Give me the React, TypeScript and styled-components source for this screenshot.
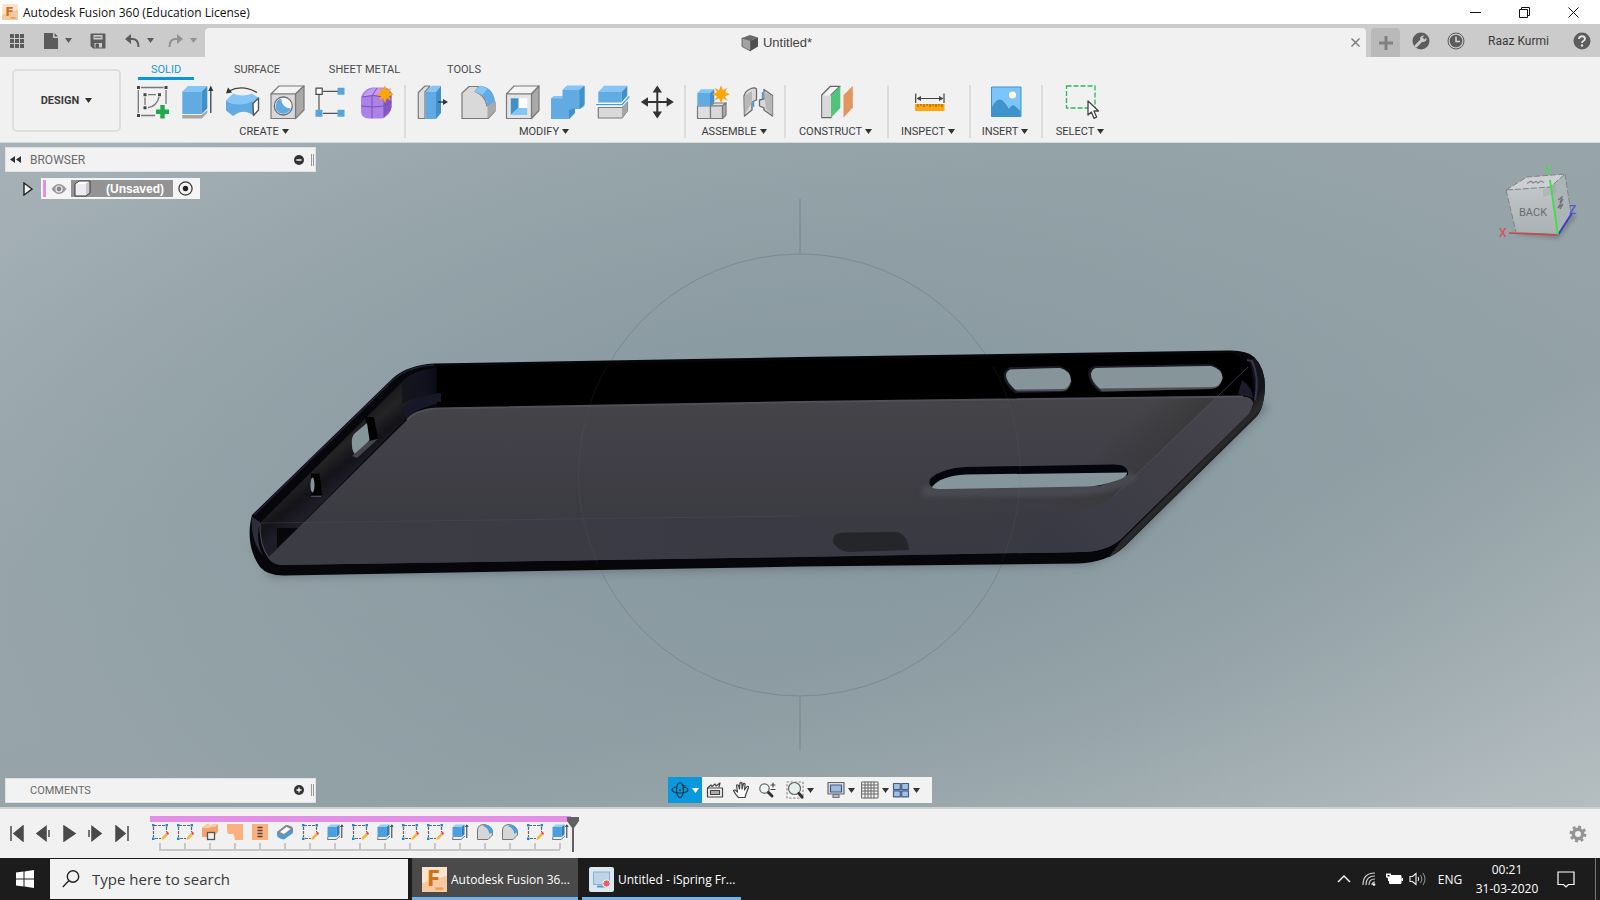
import React from "react";
import styled, { createGlobalStyle } from "styled-components";

const Global = createGlobalStyle`
  *, *::before, *::after { box-sizing: border-box; }
  body { margin: 0; background: #f1f1f1; }
  svg { display: block; flex: none; }
  button {
    border: 0; padding: 0; margin: 0; background: none; color: inherit;
    font: inherit; display: flex; align-items: center; justify-content: center;
  }
`;

const ui = `Roboto, "Liberation Sans", sans-serif`;
const shell = `"Open Sans", "Noto Sans", sans-serif`;

/* ---------- Frame ---------- */

const Window = styled.div`
  display: flex;
  flex-direction: column;
  min-height: 100vh;
  font-family: ${ui};
  font-size: 11px;
  color: #3c3c3c;
`;

const TitleBar = styled.header`
  display: flex;
  align-items: center;
  height: 24px;
  padding: 0 2px;
  background: #fff;
`;

const WindowTitle = styled.h1`
  flex: 1;
  margin: 1px 0 0 5px;
  font: 400 12px/23px ${shell};
  color: #111;
`;

const WindowButton = styled.button`
  width: 49px;
  height: 24px;
`;

const TabBar = styled.div`
  display: flex;
  height: 33px;
  background: #cbcbcb;
`;

const QuickAccess = styled.div`
  display: flex;
  align-items: center;
  gap: 18px;
  width: 205px;
  padding-left: 9px;
`;

const UndoPair = styled.div`
  display: flex;
  gap: 13px;
`;

const QuickButton = styled.button<{ $faded?: boolean }>`
  gap: 6px;
  color: ${(p) => (p.$faded ? "#929292" : "#5c5c5c")};
`;

const DocumentTab = styled.div`
  display: flex;
  flex: 1;
  align-items: center;
  margin-top: 4px;
  padding-right: 4px;
  background: #f1f1f1;
  border-radius: 4px 4px 0 0;
`;

const DocumentName = styled.div`
  display: flex;
  flex: 1;
  align-items: center;
  justify-content: center;
  gap: 4px;
  font: 13px "Liberation Sans", Arial, sans-serif;
  color: #444;
`;

const TabClose = styled.button`
  width: 14px;
  height: 20px;
`;

const NewTab = styled.button`
  width: 29px;
  height: 29px;
  margin: 4px 0 0 5px;
  background: #b9b9b9;
  border-radius: 4px 4px 0 0;
`;

const Account = styled.div`
  display: flex;
  align-items: center;
  padding: 0 9px 0 11px;
`;

const RoundButton = styled.button`
  width: 19px;
  height: 33px;
  margin-right: 16px;
  &:last-child { margin-right: 0; }
`;

const UserName = styled.button`
  padding: 0 23px 0 7px;
  font-size: 12px;
  color: #3a3a3a;
`;

/* ---------- Ribbon ---------- */

const Ribbon = styled.div`
  display: flex;
  height: 86px;
  background: #f1f1f1;
  border-bottom: 1px solid #d6d9da;
`;

const WorkspaceButton = styled.button`
  gap: 6px;
  width: 109px;
  height: 63px;
  margin: 12px 9px 0 12px;
  border: 2px solid #dedede;
  border-radius: 5px;
  font-weight: 700;
`;

const RibbonBody = styled.div`
  display: flex;
  flex-direction: column;
`;

const RibbonTabs = styled.nav`
  display: flex;
  height: 23px;
  margin-left: 8px;
`;

const RibbonTab = styled.button<{ $w: number; $active?: boolean }>`
  width: ${(p) => p.$w}px;
  height: 23px;
  padding-top: 4px;
  color: ${(p) => (p.$active ? "#1a95d6" : "#4a4a4a")};
  border-bottom: 3px solid ${(p) => (p.$active ? "#0a97d9" : "transparent")};
`;

const Groups = styled.div`
  display: flex;
  padding-top: 5px;
`;

const Group = styled.section<{ $w?: number; $lead?: number; $last?: boolean }>`
  display: flex;
  flex-direction: column;
  align-items: center;
  width: ${(p) => (p.$w ? p.$w + "px" : "auto")};
  height: 53px;
  padding: 0 4px 0 ${(p) => p.$lead ?? 4}px;
  border-right: 2px solid ${(p) => (p.$last ? "transparent" : "#dcdcdc")};
`;

const IconRow = styled.div`
  display: flex;
  height: 35px;
`;

const ToolButton = styled.button`
  width: 45px;
  height: 34px;
`;

const GroupMenu = styled.button`
  gap: 3px;
  height: 18px;
  margin-top: 5px;
  padding-right: 2px;
  white-space: nowrap;
`;

/* ---------- Canvas ---------- */

const Viewport = styled.main`
  position: relative;
  display: flex;
  flex: 1;
  flex-direction: column;
  justify-content: space-between;
  min-height: 500px;
  padding: 4px 5px;
  background:
    radial-gradient(ellipse 900px 480px at 50% 50%, rgba(127, 146, 153, 0.75), rgba(127, 146, 153, 0) 100%),
    linear-gradient(160deg, #a5b1b6 0%, #98a6ab 35%, #95a3a8 65%, #b4bdc0 100%);
`;

const Scene = styled.svg`
  position: absolute;
  inset: 0;
  width: 100%;
  height: 100%;
`;

const CubeHolder = styled.div`
  position: absolute;
  top: 17px;
  right: 15px;
`;

const Overlay = styled.div`
  position: relative;
`;

const PanelBar = styled.div`
  display: flex;
  align-items: center;
  width: 311px;
  height: 25px;
  padding: 0 1px 0 2px;
  background: #f2f2f2;
  border: 1px solid #dfe2e3;
  color: #6a6a6a;
`;

const PanelToggle = styled.button`
  width: 14px;
  height: 16px;
  margin-right: 8px;
`;

const PanelName = styled.h2<{ $small?: boolean }>`
  flex: 1;
  margin: 0;
  font-size: ${(p) => (p.$small ? 11 : 12)}px;
  font-weight: 400;
`;

const PanelGrip = styled.span`
  width: 3px;
  height: 12px;
  margin-left: 7px;
  border-left: 1px solid #999;
  border-right: 1px solid #999;
`;

const TreeRow = styled.div`
  display: flex;
  align-items: center;
  height: 21px;
  margin: 6px 0 0 15px;
`;

const Expander = styled.button`
  width: 16px;
  height: 20px;
`;

const TreeItem = styled.div`
  display: flex;
  align-items: center;
  height: 21px;
  margin-left: 5px;
  padding: 2px;
  background: #f4f4f4;
`;

const TreeStripe = styled.span`
  width: 3px;
  height: 17px;
  background: #e38fe6;
`;

const TreeButton = styled.button`
  width: 25px;
  height: 17px;
`;

const TreeLabel = styled.span`
  display: flex;
  align-items: center;
  gap: 15px;
  width: 102px;
  height: 17px;
  padding-left: 3px;
  background: #939393;
  color: #fff;
  font: 700 12px "Liberation Sans", Arial, sans-serif;
`;

const BottomRow = styled(Overlay)`
  display: grid;
  grid-template-columns: 1fr auto 1fr;
  align-items: center;
`;

const NavBar = styled.div`
  display: flex;
  align-items: center;
  height: 26px;
  padding-right: 9px;
  background: #f2f2f2;
`;

const NavButton = styled.button<{ $w: number; $active?: boolean }>`
  width: ${(p) => p.$w}px;
  height: 26px;
  gap: 3px;
  background: ${(p) => (p.$active ? "#0b98dc" : "transparent")};
`;

/* ---------- Timeline ---------- */

const Timeline = styled.footer`
  display: flex;
  height: 51px;
  background: #f1f1f1;
  border-top: 2px solid #cfd1d2;
`;

const Playback = styled.div`
  display: flex;
  align-items: center;
  width: 150px;
  padding-left: 4px;
`;

const PlayButton = styled.button`
  width: 26px;
  height: 30px;
`;

const Track = styled.div`
  width: 421px;
  padding-top: 7px;
`;

const TrackBar = styled.div`
  height: 6px;
  background: #e38fe6;
`;

const Features = styled.div`
  display: flex;
  margin: 1px -4px 0 -3px;
`;

const Feature = styled.button`
  flex-direction: column;
  flex: none;
  gap: 2px;
  width: 25px;
`;

const Tick = styled.span`
  width: 2px;
  height: 6px;
  background: #c8c8c8;
`;

const Rail = styled.div`
  height: 2px;
  margin: 0 11px 0 9px;
  background: #c8c8c8;
`;

const Marker = styled.div`
  flex: 1;
  margin: 8px 0 0 -5px;
`;

const Settings = styled.button`
  width: 44px;
`;

/* ---------- Taskbar ---------- */

const Taskbar = styled.div`
  display: flex;
  align-items: stretch;
  height: 42px;
  background: #1c1c1c;
  color: #fff;
  font-family: ${shell};
  font-size: 12px;
`;

const Start = styled.button`
  width: 50px;
`;

const Search = styled.label`
  display: flex;
  align-items: center;
  gap: 12px;
  width: 358px;
  margin: 1px 0;
  padding-left: 12px;
  background: #f2f2f2;
`;

const SearchInput = styled.input`
  flex: 1;
  min-width: 0;
  padding: 0;
  border: 0;
  outline: 0;
  background: transparent;
  font: 15px ${shell};
  color: #333;
  &::placeholder { color: #3a3a3a; opacity: 1; }
`;

const Task = styled.button<{ $w: number; $active?: boolean }>`
  justify-content: flex-start;
  gap: 4px;
  width: ${(p) => p.$w}px;
  margin-left: 4px;
  padding: 3px 0 0 ${(p) => (p.$active ? 10 : 7)}px;
  background: ${(p) => (p.$active ? "#4a4a4a" : "transparent")};
  border-bottom: 3px solid #6fb4ea;
  white-space: nowrap;
`;

const Tray = styled.div`
  display: flex;
  align-items: center;
  margin-left: auto;
`;

const TrayButton = styled.button<{ $w: number }>`
  width: ${(p) => p.$w}px;
  height: 42px;
`;

const Clock = styled.time`
  width: 76px;
  text-align: center;
  line-height: 19px;
`;

const ShowDesktop = styled.button`
  width: 5px;
  height: 42px;
  margin-left: 8px;
  border-left: 1px solid #777;
`;

/* ---------- Small drawings ---------- */

const Caret = ({ color = "#333" }: { color?: string }) => (
  <svg width="7" height="5" viewBox="0 0 7 5"><path d="M0 0H7L3.500 5Z" fill={color} /></svg>
);

const Icon = ({ children }: { children: React.ReactNode }) => (
  <svg width="37" height="36" viewBox="0 0 37 36" fill="none" strokeLinejoin="round">{children}</svg>
);

const blue = "#62abe2";
const blueDark = "#4290c9";
const blueTop = "#84c6f7";
const grey = "#d9d9d9";
const line = "#7a7a7a";

const Star = ({ x, y }: { x: number; y: number }) => (
  <path
    transform={`translate(${x} ${y})`}
    d="M0-9L2-4L6.500-6.500L4-2L9 0L4 2L6.500 6.500L2 4L0 9L-2 4L-6.500 6.500L-4 2L-9 0L-4-2L-6.500-6.500L-2-4Z"
    fill="#fba50c"
  />
);

const tools: Record<string, React.ReactNode> = {
  sketch: (
    <Icon>
      <path d="M7 3.500H29.500M4.300 6V29M7 31.500H21M32 6V20" stroke="#777" strokeWidth="1.300" />
      <path d="M14 10.700H22M11 13.500V21M25 13Q23 22 14 23.700" stroke="#777" strokeWidth="1.300" />
      <path d="M3 2h3v3h-3zM30.500 2h3v3h-3zM3 30h3v3h-3zM9.500 9.200h3v3h-3zM24 9.200h3v3h-3zM9.500 22.200h3v3h-3z" fill="#444" />
      <path d="M26.300 21h4.400v4.600H35v4.400h-4.300v4.600h-4.400V30H22v-4.400h4.300z" fill="#1fa84c" />
    </Icon>
  ),
  extrude: (
    <Icon>
      <path d="M3.300 31H22.700L28.300 26V29L22.700 34.500H3.300Z" fill="#a6a6a6" />
      <path d="M3.300 7.500L9 2H28.300L22.700 7.500Z" fill={blueTop} />
      <rect x="3.300" y="7.500" width="19.400" height="22.500" fill={blue} />
      <path d="M22.700 7.500L28.300 2V24.500L22.700 30Z" fill={blueDark} />
      <path d="M31.800 5V29" stroke="#333" strokeWidth="1.200" />
      <path d="M31.800 1.500L34.300 7H29.300Z" fill="#333" />
    </Icon>
  ),
  revolve: (
    <Icon>
      <path d="M5 7Q18 0 33 8.500" stroke="#444" strokeWidth="1.300" />
      <path d="M2 9.500L4 3.500L8 8.500Z" fill="#333" />
      <path d="M2 16.500L9 9.500Q18 13.500 28 9.500L35 14L29 19Q18 26 2 16.500Z" fill={blueTop} />
      <path d="M2 16.500Q8 20.500 15 20.500Q23 20.500 29 17V31L24 28.500Q17 26 9 32L2 26.500Z" fill={blue} />
      <path d="M29 19.500L34.500 14V26L29.500 31.500Z" fill="#fff" stroke="#555" strokeWidth="1.400" />
    </Icon>
  ),
  hole: (
    <Icon>
      <path d="M2 10L10 2H35L26.500 10Z" fill="#f3f3f3" stroke={line} strokeWidth="1.200" />
      <path d="M26.500 10L35 2V26L26.500 34.500Z" fill="#a9a9a9" stroke={line} strokeWidth="1.200" />
      <path d="M2 10H26.500V34.500H2Z" fill={grey} stroke={line} strokeWidth="1.200" />
      <circle cx="14.300" cy="22" r="9" fill="#f6f6f6" stroke="#6e6e6e" strokeWidth="1.300" />
      <path d="M12 14.500Q13 24 22 24.500Q19 30.500 13 29.800Q6.500 28 6.500 22Q7 16 12 14.500Z" fill={blue} />
    </Icon>
  ),
  pattern: (
    <Icon>
      <path d="M9 7.300H24M5 11V26M9 29.300H24" stroke="#555" strokeWidth="1.200" />
      <rect x="2" y="4.200" width="6.200" height="6.200" fill="#fff" stroke="#444" strokeWidth="1.200" />
      <path d="M23.500 3.800h7v7h-7zM1.500 25.800h7v7h-7zM23.500 25.800h7v7h-7z" fill="#56a5dd" />
    </Icon>
  ),
  form: (
    <Icon>
      <path d="M2 15Q2 10 7 6Q10 3 15 3.500H24Q32 3 32.500 11V23Q32 29 26 33Q24 35 20 34.500H9Q2 34 2 27Z" fill="#ab82e6" />
      <path d="M3.500 13Q8 5 14 4.500H23Q28 5 27 8L23 12Q10 10 3.500 13Z" fill="#c39df2" />
      <path d="M25 13L32.500 8V23Q32 28 25 33Z" fill="#8459c4" />
      <path d="M2 22Q14 24 25 22L32.500 18M13 12V34.500M3 13Q14 10 25 13V33.500M13 12L18 4" stroke="#7d50bc" />
      <Star x={26} y={10.300} />
    </Icon>
  ),
  press: (
    <Icon>
      <path d="M10.500 34.500H4.300V8.500L11 2H16L11 8V34.500Z" fill="#dedede" stroke={line} strokeWidth="1.200" />
      <path d="M11.500 8L18 1.700H27L22 8Z" fill={blueTop} />
      <path d="M11.500 8H22V35H11.500Z" fill={blue} />
      <path d="M22 8L27 1.700V29L22 35Z" fill={blueDark} />
      <path d="M24 18H31" stroke="#333" strokeWidth="1.300" />
      <path d="M29 15L34 18L29 21Z" fill="#333" />
    </Icon>
  ),
  fillet: (
    <Icon>
      <path d="M3 34.500V9L10 2.500H20L16 7.500Q26 11 28 22L36 18V27L29 34.500Z" fill={grey} stroke={line} strokeWidth="1.200" />
      <path d="M28.500 22L36 17V27L28.500 34.500Z" fill="#aaa" />
      <path d="M15 7.500L21 1.700Q34 3 36 17L28.500 22Q27 10 15 7.500Z" fill={blue} />
      <path d="M15 7.500L21 1.700Q25 2 28.500 5L23 11Q19 8 15 7.500Z" fill={blueTop} />
    </Icon>
  ),
  shell: (
    <Icon>
      <path d="M2.500 10L10 2H35L27.500 10Z" fill="#f3f3f3" stroke={line} strokeWidth="1.200" />
      <path d="M27.500 10L35 2V26.500L27.500 34.500Z" fill="#a9a9a9" stroke={line} strokeWidth="1.200" />
      <path d="M2.500 10H27.500V34.500H2.500Z" fill="#e4e4e4" stroke={line} strokeWidth="1.200" />
      <path d="M6.700 14.300H23.300V31H6.700Z" fill="#fff" />
      <path d="M6.700 14.300H14.500V24L6.700 31Z" fill={blueDark} />
      <path d="M6.700 31L14.500 24H23.300V31Z" fill={blueTop} />
    </Icon>
  ),
  combine: (
    <Icon>
      <path d="M2 14.500L5 12H13.500V6L18 1.700H35.500V22L31 25H25.500V29L20 35H2Z" fill={blue} />
      <path d="M13.500 6L18 1.700H35.500L30.500 6Z" fill={blueTop} />
      <path d="M2 14.500L5 12H13.500V14.500Z" fill={blueTop} />
      <path d="M30.500 6L35.500 1.700V20L30.500 25ZM20 26L26 24V29L20 35Z" fill={blueDark} />
    </Icon>
  ),
  split: (
    <Icon>
      <path d="M4.300 8L10 1.700H33.300L27.700 8Z" fill={blueTop} />
      <path d="M4.300 8H27.700V18.500H4.300Z" fill={blue} />
      <path d="M27.700 8L33.300 1.700V12L27.700 18.500Z" fill={blueDark} />
      <path d="M4.300 23.500H28L33.300 18V27L28 34H4.300Z" fill={grey} stroke={line} strokeWidth="1.200" />
      <path d="M28 23.500L33.300 18V27L28 34Z" fill="#a6a6a6" />
      <path d="M2 20.700H28L35.300 12.500" stroke="#fff" strokeWidth="3.500" />
      <path d="M2 20.700H28L35.300 12.500" stroke="#3f9fe0" strokeWidth="1.300" />
    </Icon>
  ),
  move: (
    <Icon>
      <path d="M18.300 6V30M6 18H31" stroke="#333" strokeWidth="2" />
      <path d="M18.300 1.500L23 8.500H13.600ZM18.300 34.500L23 27.500H13.600ZM1.800 18L9 13.300V22.700ZM34.800 18L27.600 13.300V22.700Z" fill="#333" />
    </Icon>
  ),
  component: (
    <Icon>
      <path d="M3.500 22H16.500V34.500H3.500ZM16.500 22L20 19H32L28.500 22Z" fill="#dedede" stroke={line} strokeWidth="1.200" />
      <path d="M16.500 22H28.500V34.500H16.500Z" fill={grey} stroke={line} strokeWidth="1.200" />
      <path d="M28.500 22L32 19V31L28.500 34.500Z" fill="#aaa" stroke={line} strokeWidth="1.200" />
      <path d="M3.300 9L7 5.300H20.300L16 9Z" fill={blueTop} />
      <path d="M3.300 9H16V22H3.300Z" fill={blue} />
      <path d="M16 9L20.300 5.300V18L16 22Z" fill={blueDark} />
      <Star x={27} y={10.300} />
    </Icon>
  ),
  joint: (
    <Icon>
      <path d="M5 12Q6 7 12 4.500Q16 3 17.500 5V16L13 18V26L5.500 32Z" fill={grey} stroke="#6a6a6a" strokeWidth="1.300" />
      <path d="M13 7V18L5.500 31V12Z" fill="#b7b7b7" />
      <path d="M25 8V5.500L33.500 11.500V32L25 26V24L20.500 22V16L25 15Z" fill={grey} stroke="#6a6a6a" strokeWidth="1.300" />
      <path d="M25 8L33.500 12V31L27 25Z" fill="#b7b7b7" />
      <path d="M14.500 17V23M23.500 8V15" stroke="#3f9fe0" strokeWidth="1.500" />
    </Icon>
  ),
  construct: (
    <Icon>
      <path d="M3.800 11L12.500 2.300H22L13 11V33.700H3.800Z" fill="#f4f4f4" stroke="#666" strokeWidth="1.300" />
      <path d="M4.500 11.500H13V33H4.500Z" fill={grey} />
      <path d="M13 11L22.300 2V24L13 33.700Z" fill="#52c37c" />
      <path d="M25.500 11L34.800 2V23.500L25.500 33.700Z" fill="#e3955f" />
    </Icon>
  ),
  measure: (
    <Icon>
      <path d="M4.700 9.500V19M33 9.500V19M6 14.500H32" stroke="#444" strokeWidth="1.200" />
      <path d="M5.500 14.500L10 12V17ZM32.500 14.500L28 12V17Z" fill="#444" />
      <rect x="4" y="20" width="29.500" height="7" fill="#fba713" />
      <path d="M7 20v3M10 20v2M13 20v3M16 20v2M19 20v3M22 20v2M25 20v3M28 20v2M31 20v3" stroke="#84560a" />
    </Icon>
  ),
  picture: (
    <Icon>
      <rect x="3.500" y="3" width="29.500" height="29.500" fill="#7cc5fa" stroke="#3f93cc" />
      <path d="M4 23Q8 15 12 15.500Q16 16 21 25Q25 18 29 24L32.500 27V32H4Z" fill="#3f93cc" />
      <circle cx="24.500" cy="11" r="3.600" fill="#fdfbd8" />
    </Icon>
  ),
  select: (
    <Icon>
      <rect x="3.500" y="2" width="28.500" height="22" stroke="#2fb45d" strokeWidth="1.300" strokeDasharray="5 2" />
      <path d="M25 17V31L28.300 28L31 34.300L33.600 33.100L30.900 27H35.500Z" fill="#fff" stroke="#444" strokeWidth="1.300" />
    </Icon>
  ),
};

const groups = [
  { name: "CREATE", lead: 0, icons: ["sketch", "extrude", "revolve", "hole", "pattern", "form"] },
  { name: "MODIFY", icons: ["press", "fillet", "shell", "combine", "split", "move"] },
  { name: "ASSEMBLE", w: 100, icons: ["component", "joint"] },
  { name: "CONSTRUCT", w: 103, icons: ["construct"] },
  { name: "INSPECT", w: 82, icons: ["measure"] },
  { name: "INSERT", w: 72, icons: ["picture"] },
  { name: "SELECT", w: 78, icons: ["select"], last: true },
];

/* ---------- Timeline features ---------- */

const features: Record<string, React.ReactNode> = {
  sketch: (
    <>
      <path d="M3 2.500H14M2.500 4V14M15.500 4V9M4 15.500H10" stroke="#666" strokeDasharray="3 1" strokeWidth="1.200" />
      <path d="M1 1h2.500v2.500H1zM14.500 1H17v2.500h-2.500zM1 14.500h2.500V17H1z" fill="#1b87dd" />
      <path d="M10.500 17L11 14.500L15 10L17 12L13 16Z" fill="#f6b53c" />
      <path d="M15 10L16.500 8.500L18 10.500L17 12Z" fill="#ee3b4b" />
    </>
  ),
  join: (
    <>
      <path d="M1 5L5 1.500H9V3.500L12 1H17V9L14 12H11L8 14H1Z" fill="#f5a36d" />
      <path d="M1 5L5 1.500H9V5ZM9 4L12 1H17L14 4Z" fill="#fccba6" />
      <rect x="6.500" y="9.500" width="7" height="7" fill="#f1f1f1" stroke="#555" strokeWidth="1.300" />
    </>
  ),
  flange: <path d="M1 1H17V17H9Q8 11 7 11H3Q1 10 1 7Z" fill="#fcb07d" />,
  bend: (
    <>
      <path d="M1 1H17V17H1Z" fill="#fcb07d" />
      <path d="M6.500 4.500h5M6.500 7.500h5M6.500 10.500h5M6.500 13.500h5" stroke="#444" strokeWidth="1.400" />
    </>
  ),
  thicken: (
    <>
      <path d="M1 9L10 2Q17 3 17 6V10L8 16.500Q1 15 1 12Z" fill="#4a9bd9" />
      <path d="M1 9L10 2Q16 2.500 17 6L8 12.500Q2 12 1 9Z" fill="#868b8f" />
      <path d="M4 9L10.500 4L14.500 6L8 11Z" fill="#fff" />
    </>
  ),
  extrude: (
    <>
      <path d="M2 14L1.500 16.500H10L14 13" stroke="#777" />
      <path d="M1.500 4L4.500 1.500H13.500L10.500 4Z" fill="#93cef7" />
      <path d="M1.500 4H10.500V14H1.500Z" fill="#4c9fdd" />
      <path d="M10.500 4L13.500 1.500V11.500L10.500 14Z" fill="#2f7fbd" />
      <path d="M15.800 15V3M14.500 4L15.800 1.800L17.100 4" stroke="#333" />
    </>
  ),
  fillet: (
    <>
      <path d="M1.500 16.500V7Q2 1.500 8 1.500Q16.500 3 16.500 9V12L12 16.500Z" fill="#d6d6d6" stroke="#777" />
      <path d="M7 3L9.500 1.500Q16.500 3 16.800 9L13.500 11Q12.500 5 7 3Z" fill="#4c9fdd" />
    </>
  ),
};

const history = [
  "sketch", "sketch", "join", "flange", "bend", "thicken", "sketch", "extrude", "sketch",
  "extrude", "sketch", "sketch", "extrude", "fillet", "fillet", "sketch", "extrude",
];

const playback = [
  ["Go to start", "M2 1V16M14 1L5 8.500L14 16Z"],
  ["Step back", "M11 1.500L2 8.500L11 15.500ZM14 5V12"],
  ["Play", "M3 1L14 8.500L3 16Z"],
  ["Step forward", "M5 1.500L14 8.500L5 15.500ZM2 5V12"],
  ["Go to end", "M3 1L12 8.500L3 16ZM15 1V16"],
];

/* ---------- Model ---------- */

const Model = () => (
  <Scene viewBox="0 143 1600 664" preserveAspectRatio="xMidYMid slice" fill="none">
    <defs>
      <linearGradient id="floor" x1="0" y1="395" x2="0" y2="565" gradientUnits="userSpaceOnUse">
        <stop offset="0" stopColor="#464549" />
        <stop offset=".15" stopColor="#434246" />
        <stop offset=".35" stopColor="#413f48" />
        <stop offset=".6" stopColor="#3d3d43" />
        <stop offset="1" stopColor="#363842" />
      </linearGradient>
      <linearGradient id="leftWall" x1="320" y1="435" x2="352" y2="475" gradientUnits="userSpaceOnUse">
        <stop offset="0" stopColor="#101015" />
        <stop offset=".45" stopColor="#242425" />
        <stop offset=".75" stopColor="#131318" />
        <stop offset="1" stopColor="#1d1c27" />
      </linearGradient>
      <linearGradient id="corner" x1="400" y1="0" x2="441" y2="0" gradientUnits="userSpaceOnUse">
        <stop offset="0" stopColor="#15151b" />
        <stop offset=".6" stopColor="#11121f" />
        <stop offset="1" stopColor="#080810" />
      </linearGradient>
      <linearGradient id="strip" x1="1240" y1="400" x2="1060" y2="560" gradientUnits="userSpaceOnUse">
        <stop offset="0" stopColor="#46444d" />
        <stop offset="1" stopColor="#383943" />
      </linearGradient>
      <linearGradient id="shade" x1="1130" y1="420" x2="1174" y2="466" gradientUnits="userSpaceOnUse">
        <stop offset="0" stopColor="#3b3a3d" stopOpacity="0" />
        <stop offset=".6" stopColor="#3b3a3d" />
        <stop offset="1" stopColor="#38373b" />
      </linearGradient>
      <linearGradient id="lower" x1="260" y1="0" x2="1110" y2="0" gradientUnits="userSpaceOnUse">
        <stop offset="0" stopColor="#3c3c45" />
        <stop offset=".6" stopColor="#393a43" />
        <stop offset=".75" stopColor="#393a43" stopOpacity=".6" />
        <stop offset="1" stopColor="#393a43" />
      </linearGradient>
      <linearGradient id="rightRim" x1="1180" y1="470" x2="1194" y2="484" gradientUnits="userSpaceOnUse">
        <stop offset="0" stopColor="#15151c" />
        <stop offset=".6" stopColor="#2b2b2d" />
        <stop offset="1" stopColor="#111114" />
      </linearGradient>
      <linearGradient id="hole" x1="0" y1="365" x2="0" y2="490" gradientUnits="userSpaceOnUse">
        <stop offset="0" stopColor="#869599" />
        <stop offset="1" stopColor="#84969c" />
      </linearGradient>
      <filter id="soft" x="-10%" y="-10%" width="120%" height="130%"><feGaussianBlur stdDeviation="4" /></filter>
      <filter id="edge" x="-10%" y="-30%" width="120%" height="160%"><feGaussianBlur stdDeviation="2" /></filter>
    </defs>

    <circle cx="800" cy="475" r="221" stroke="#74838a" strokeOpacity=".75" />
    <path d="M800 199V253M800 696V751" stroke="#74838a" strokeOpacity=".85" />

    <path d="M252 545L270 577L1090 565L1126 549L1268 408L1240 380L300 540Z" fill="#5b696e" opacity=".65" filter="url(#soft)" />

    <path
      d="M252 515L393 378Q408 365 434 363.500L800 357L1228 350.500Q1247 350 1254 357Q1265 368 1265 387Q1264 409 1256 417L1124 547Q1108 562 1078 563.500L800 566.500L285 575.500Q268 576 260 567C248 550 248 530 252 515Z"
      fill="#06060b"
    />
    <path d="M254 515L394 379Q410 366 434 365" stroke="#1f2136" strokeWidth="1.500" />
    <path d="M260 523L402 382Q412 371 437 368L441 402Q414 405 404 421L268 558Q258 545 260 523Z" fill="url(#leftWall)" />
    <path d="M402 382Q412 370 437 368L438 393Q412 398 402 404Z" fill="url(#corner)" />
    <path d="M402 408Q416 397 441 393V403Q416 408 406 419Z" fill="#171827" />
    <path d="M437 366L1232 353L1250 362L1253 395L437 408V402H441V393H437Z" fill="#000" />
    <path d="M252 517Q250 540 263 556Q255 540 260 522Z" fill="#2d2e3c" />
    <path d="M260 523Q259 545 269 558" stroke="#4b4c59" />

    <path
      d="M407 420Q415 410 437 408.500L800 402L1243 396.500Q1253 397 1253 404Q1252 410 1249 414L1121 539Q1106 552 1080 552L800 557L280 565Q272 564 268 558Z"
      fill="url(#floor)"
    />
    <path d="M1040 399L1217 397L1113 497Q1096 510 1073 511L900 514Z" fill="url(#shade)" />
    <path d="M303 523L860 515L1073 511Q1096 510 1113 497L1121 539Q1106 552 1080 552L800 557L280 565L268 558Z" fill="url(#lower)" />
    <path d="M1217 397H1243Q1253 397 1253 404L1249 414L1121 539Q1106 552 1080 552L1020 553L1060 512Q1090 511 1113 497Z" fill="url(#strip)" />
    <path d="M1248 367L1113 497" stroke="#55545c" strokeOpacity=".6" />
    <path d="M261 523L800 516" stroke="#55545c" strokeOpacity=".35" />
    <path d="M407 420Q415 410 437 408.500L800 402L1243 396.500" stroke="#514e58" strokeWidth="2" />
    <path d="M277 528H298L277 548Z" fill="#07070b" />

    <path d="M1254 357Q1265 368 1265 387Q1264 409 1256 417L1124 547Q1116 554 1108 558L1121 541L1249 414Q1260 395 1250 362Z" fill="url(#rightRim)" />
    <path d="M1247 360L1252 361Q1260 378 1255 400" stroke="#34354a" strokeWidth="2" />
    <path d="M1242 380Q1253 388 1253 398L1238 394Z" fill="#1c1c2e" />

    <path d="M365 417L374 417L378 439L369 441Z" fill="#000" />
    <path d="M367 423L369.500 440L357 456Q352 452 352 446Q351 438 354 434Z" fill="url(#hole)" />
    <path d="M369 441L378 439L357 458L352 456Z" fill="#45464d" />
    <path d="M311 473.500H319.500L322 495H311Z" fill="#000" />
    <ellipse cx="312.500" cy="485" rx="2" ry="7.500" fill="#84959b" />
    <path d="M311 496.500H321" stroke="#4a4b55" />

    <path d="M1010 367L1060 366Q1072 370 1071.500 382Q1070 391 1063 392L1015 393Q1004 384 1003.500 376Q1004 370 1010 367Z" fill="#1b1b26" />
    <path d="M1011 369.500L1060 368Q1071 371 1071 381Q1069 391 1062 391L1017 391.500Q1006 383 1006 375Q1007 370 1011 369.500Z" fill="#4f4f5a" />
    <path d="M1011 369.500L1060 368Q1071 371 1071 381Q1068 389 1064 389L1015 389.500Q1006 381 1006 375Q1007 370 1011 369.500Z" fill="url(#hole)" />
    <path d="M1095 366L1210 364Q1223 368 1223 378Q1221 388 1213 389L1100 392Q1089 384 1088 374Q1089 367 1095 366Z" fill="#1b1b26" />
    <path d="M1096 368L1211 366Q1222 369 1222.500 378Q1220 389 1211 389L1102 391.500Q1091 383 1091 374Q1092 369 1096 368Z" fill="#4f4f5a" />
    <path d="M1096 368L1211 366Q1222 369 1222.500 378Q1220 387 1213 387L1100 388.500Q1091 381 1091 374Q1092 369 1096 368Z" fill="url(#hole)" />

    <path d="M924 486Q918 493 925 497L1075 496Q1120 493 1138 478L1130 472Z" fill="#4b4b55" opacity=".85" filter="url(#edge)" />
    <path d="M932 487Q927 483 931 478Q943 468 966 467L1112 464.500Q1129 464 1128 475L1100 486Z" fill="#05060d" />
    <path d="M932 487Q940 476 966 474.500L1127 472.500Q1128 477 1115 481Q1100 486 1088 486.500L944 489Q932 489 932 487Z" fill="url(#hole)" />
    <path d="M836 534Q842 532 848 532.500L898 532Q908 536 909 550L848 552Q837 550 833 542Q833 537 836 534Z" fill="#252629" />

    <path d="M607 366A221 221 0 0 0 598 565M993 366A221 221 0 0 1 1002 561" stroke="#6b7074" strokeOpacity=".14" />
  </Scene>
);

const ViewCube = () => (
  <svg width="90" height="85" viewBox="1495 160 90 85" fill="none" role="img" aria-label="View cube">
    <defs>
      <linearGradient id="face" x1="0" y1="185" x2="0" y2="235" gradientUnits="userSpaceOnUse">
        <stop offset="0" stopColor="#c3c8ca" /><stop offset="1" stopColor="#a9b0b3" />
      </linearGradient>
      <filter id="cubeShadow" x="-20%" y="-60%" width="140%" height="220%"><feGaussianBlur stdDeviation="2" /></filter>
    </defs>
    <path d="M1514 234L1558 239L1576 217L1570 210L1530 228Z" fill="#6c797e" opacity=".7" filter="url(#cubeShadow)" />
    <path d="M1506 190L1527 177L1565 174L1550.500 187Z" fill="#ccd0d2" />
    <path d="M1506 190L1550.500 187L1558 234L1516 232Z" fill="url(#face)" />
    <path d="M1550.500 187L1565 174L1571 213L1558 234Z" fill="#adb4b7" />
    <path d="M1543 189L1550 187L1556 183V193L1543 197Z" fill="#9aa3a6" opacity=".4" />
    <path d="M1506 190L1527 177L1565 174L1550.500 187ZM1565 174L1571 213M1506 190L1516 232" stroke="#7d8386" strokeDasharray="6 2" />
    <path d="M1527 183.500L1531 181L1533 183L1536 181.500L1538 183L1541 181L1544 182.500" stroke="#85898c" strokeWidth="1.300" />
    <path d="M1558 200L1562 197L1560 203L1563 199L1558 208L1563 204L1560 209" stroke="#6c7174" strokeWidth="1.200" />
    <path d="M1509 233L1558 235" stroke="#c9484c" strokeWidth="1.600" />
    <path d="M1558 235L1572 213" stroke="#3c3cc4" strokeWidth="1.800" />
    <path d="M1550 180L1558 235" stroke="#3fe045" strokeWidth="1.800" />
    <text x="1519" y="216" fontFamily={ui} fontSize="11" fill="#676d70">BACK</text>
    <text x="1499" y="237" fontFamily={ui} fontSize="12" fontWeight="500" fill="#d4565a">X</text>
    <text x="1544" y="175" fontFamily={ui} fontSize="12" fontWeight="500" fill="#4fd556">Y</text>
    <text x="1569" y="214" fontFamily={ui} fontSize="12" fontWeight="500" fill="#5357d6">Z</text>
  </svg>
);

const FusionLogo = ({ size }: { size: number }) => (
  <svg width={size} height={size} viewBox="0 0 26 26">
    <rect width="26" height="26" fill="#fbe3cd" />
    <path d="M0 26V17L26 9V26Z" fill="#f6c9a0" />
    <text x="6" y="20" fontFamily={ui} fontSize="22" fontWeight="900" fill="#cf7414">F</text>
    <path d="M14 22.500H22" stroke="#ee9c55" strokeWidth="2.500" />
  </svg>
);

const NavIcon = ({ children }: { children: React.ReactNode }) => (
  <svg width="18" height="18" viewBox="0 0 18 18" fill="none" stroke="#444" strokeWidth="1.200" strokeLinejoin="round" strokeLinecap="round">
    {children}
  </svg>
);

export default function App() {
  return (
    <Window>
      <Global />
      <TitleBar>
        <FusionLogo size={16} />
        <WindowTitle>Autodesk Fusion 360 (Education License)</WindowTitle>
        <WindowButton aria-label="Minimize">
          <svg width="11" height="11" viewBox="0 0 11 11"><path d="M0 5.500H11" stroke="#111" /></svg>
        </WindowButton>
        <WindowButton aria-label="Restore">
          <svg width="11" height="11" viewBox="0 0 11 11" fill="none" stroke="#111"><path d="M.5 2.500H8.500V10.500H.5ZM2.500 2.500V.5H10.500V8.500H8.500" /></svg>
        </WindowButton>
        <WindowButton aria-label="Close">
          <svg width="11" height="11" viewBox="0 0 11 11"><path d="M.5 .5L10.500 10.500M10.500 .5L.5 10.500" stroke="#111" /></svg>
        </WindowButton>
      </TitleBar>

      <TabBar>
        <QuickAccess>
          <QuickButton aria-label="Data panel">
            <svg width="16" height="16" viewBox="0 0 16 16" fill="currentColor">
              <path d="M1 1h4v4H1zM6 1h4v4H6zM11 1h4v4h-4zM1 6h4v4H1zM6 6h4v4H6zM11 6h4v4h-4zM1 11h4v4H1zM6 11h4v4H6zM11 11h4v4h-4z" />
            </svg>
          </QuickButton>
          <QuickButton aria-label="File">
            <svg width="16" height="18" viewBox="0 0 16 18" fill="currentColor"><path d="M1 1H10V6H15V17H1ZM11.500 1L15 4.500H11.500Z" /></svg>
            <Caret color="#5c5c5c" />
          </QuickButton>
          <QuickButton aria-label="Save">
            <svg width="16" height="16" viewBox="0 0 16 16"><path d="M0.500 1.500Q.5 .5 1.500 .5H14.500Q15.500 .5 15.500 1.500V14.500Q15.500 15.500 14.500 15.500H3L.5 13Z" fill="#5c5c5c" />
              <path d="M3.500 2H12.500V6.500H3.500ZM4.500 10H12V14.500H4.500Z" fill="#cbcbcb" /><path d="M4.500 4.200H11.500M6 11H8.500V14.500H6Z" stroke="#5c5c5c" fill="#5c5c5c" /></svg>
          </QuickButton>
          <UndoPair>
            <QuickButton aria-label="Undo">
              <svg width="17" height="16" viewBox="0 0 17 16" fill="none"><path d="M4 6H9Q14.500 6.500 14.500 14" stroke="currentColor" strokeWidth="2" /><path d="M1 6L7 1V11Z" fill="currentColor" /></svg>
              <Caret color="#5c5c5c" />
            </QuickButton>
            <QuickButton $faded aria-label="Redo">
              <svg width="17" height="16" viewBox="0 0 17 16" fill="none"><path d="M13 6H8Q2.500 6.500 2.500 14" stroke="currentColor" strokeWidth="2" /><path d="M16 6L10 1V11Z" fill="currentColor" /></svg>
              <Caret color="#929292" />
            </QuickButton>
          </UndoPair>
        </QuickAccess>
        <DocumentTab>
          <DocumentName>
            <svg width="18" height="18" viewBox="0 0 18 18"><path d="M1 4L9 1L17 3.500L9.500 6.500Z" fill="#6a6a6a" /><path d="M1 4L9.500 6.500V17L1 12.500Z" fill="#a2a2a2" stroke="#555" strokeWidth=".8" /><path d="M9.500 6.500L17 3.500V12.500L9.500 17Z" fill="#4f4f4f" /></svg>
            Untitled*
          </DocumentName>
          <TabClose aria-label="Close tab">
            <svg width="9" height="9" viewBox="0 0 9 9"><path d="M.5 .5L8.500 8.500M8.500 .5L.5 8.500" stroke="#777" strokeWidth="1.400" /></svg>
          </TabClose>
        </DocumentTab>
        <NewTab aria-label="New tab">
          <svg width="14" height="14" viewBox="0 0 14 14"><path d="M7 0V14M0 7H14" stroke="#808080" strokeWidth="3" /></svg>
        </NewTab>
        <Account>
          <RoundButton aria-label="Extensions">
            <svg width="18" height="18" viewBox="0 0 18 18"><circle cx="9" cy="9" r="8.500" fill="#5c5c5c" /><path d="M4 14L10 8" stroke="#cbcbcb" strokeWidth="3" strokeLinecap="round" /><path d="M8 6Q9 3 12.500 3.500L10.500 5.500L12.500 7.500L14.500 5.500Q15 9 12 10Q9 10.500 8 6Z" fill="#cbcbcb" /></svg>
          </RoundButton>
          <RoundButton aria-label="Job status">
            <svg width="18" height="18" viewBox="0 0 18 18" fill="none"><circle cx="9" cy="9" r="8" stroke="#5c5c5c" /><circle cx="9" cy="9" r="6.300" fill="#5c5c5c" /><path d="M9 4.500V9.500H13" stroke="#d6d6d6" strokeWidth="1.500" /></svg>
          </RoundButton>
          <UserName>Raaz Kurmi</UserName>
          <RoundButton aria-label="Help">
            <svg width="18" height="18" viewBox="0 0 18 18" fill="none"><circle cx="9" cy="9" r="8.500" fill="#5c5c5c" /><path d="M6 7Q6 4.200 9 4.200Q12 4.200 12 6.800Q12 8.200 10.300 9Q9 9.700 9 11" stroke="#e2e2e2" strokeWidth="1.900" /><circle cx="9" cy="13.500" r="1.200" fill="#e2e2e2" /></svg>
          </RoundButton>
        </Account>
      </TabBar>

      <Ribbon>
        <WorkspaceButton>DESIGN <Caret /></WorkspaceButton>
        <RibbonBody>
          <RibbonTabs>
            <RibbonTab $w={56} $active>SOLID</RibbonTab>
            <RibbonTab $w={126}>SURFACE</RibbonTab>
            <RibbonTab $w={89}>SHEET METAL</RibbonTab>
            <RibbonTab $w={110}>TOOLS</RibbonTab>
          </RibbonTabs>
          <Groups>
            {groups.map((g) => (
              <Group key={g.name} $w={g.w} $lead={g.lead} $last={g.last}>
                <IconRow>
                  {g.icons.map((i) => (
                    <ToolButton key={i} aria-label={i}>{tools[i]}</ToolButton>
                  ))}
                </IconRow>
                <GroupMenu>{g.name} <Caret /></GroupMenu>
              </Group>
            ))}
          </Groups>
        </RibbonBody>
      </Ribbon>

      <Viewport>
        <Model />
        <CubeHolder><ViewCube /></CubeHolder>
        <Overlay>
          <PanelBar>
            <PanelToggle aria-label="Collapse browser">
              <svg width="11" height="7" viewBox="0 0 11 7"><path d="M5 0V7L0 3.500ZM11 0V7L6 3.500Z" fill="#333" /></svg>
            </PanelToggle>
            <PanelName>BROWSER</PanelName>
            <svg width="10" height="10" viewBox="0 0 10 10"><circle cx="5" cy="5" r="5" fill="#333" /><path d="M2.500 5H7.500" stroke="#fff" strokeWidth="1.500" /></svg>
            <PanelGrip />
          </PanelBar>
          <TreeRow>
            <Expander aria-label="Expand">
              <svg width="10" height="14" viewBox="0 0 10 14"><path d="M1 1L9 7L1 13Z" fill="#f4f4f4" stroke="#222" strokeWidth="1.400" /></svg>
            </Expander>
            <TreeItem>
              <TreeStripe />
              <TreeButton aria-label="Visibility">
                <svg width="16" height="12" viewBox="0 0 16 12" fill="none"><path d="M.5 6Q8-4 15.500 6Q8 16 .5 6Z" fill="#999" /><circle cx="8" cy="6" r="3.600" fill="#eee" /><circle cx="8" cy="6" r="2.400" fill="#888" /></svg>
              </TreeButton>
              <TreeLabel>
                <svg width="17" height="17" viewBox="0 0 17 17"><path d="M1 4L5 1H16L12 4Z" fill="#fff" /><path d="M12 4L16 1V13L12 16Z" fill="#c6c6cc" /><path d="M1 4H12V16H1Z" fill="#ececf1" /><path d="M1 4L5 1H16V13L12 16H1Z" fill="none" stroke="#3d3d3d" /></svg>
                (Unsaved)
              </TreeLabel>
              <TreeButton aria-label="Activate">
                <svg width="15" height="15" viewBox="0 0 15 15" fill="none"><circle cx="7.500" cy="7.500" r="6.600" stroke="#333" strokeWidth="1.200" /><circle cx="7.500" cy="7.500" r="2.700" fill="#222" /></svg>
              </TreeButton>
            </TreeItem>
          </TreeRow>
        </Overlay>
        <BottomRow>
          <PanelBar>
            <PanelToggle aria-label="Expand comments" />
            <PanelName $small>COMMENTS</PanelName>
            <svg width="10" height="10" viewBox="0 0 10 10"><circle cx="5" cy="5" r="5" fill="#333" /><path d="M2.500 5H7.500M5 2.500V7.500" stroke="#fff" strokeWidth="1.300" /></svg>
            <PanelGrip />
          </PanelBar>
          <NavBar>
            <NavButton $w={34} $active aria-label="Orbit">
              <NavIcon><g stroke="#1b3f55"><ellipse cx="9" cy="9" rx="3.500" ry="7.500" /><path d="M5 6Q1 7 1 9Q2 12 9 12Q16 12 17 9Q17 7 13 6M11 4L14 5L12 8" /></g><circle cx="9" cy="9" r="1.200" fill="#124f86" stroke="none" /></NavIcon>
              <Caret color="#fff" />
            </NavButton>
            <NavButton $w={25} aria-label="Look at">
              <NavIcon><path d="M1.500 7H16.500V16H1.500ZM4.500 9.500H13.500V13.500H4.500Z" /><path d="M2 6.500L5 4L6 5.500L9 3L10 5L14 2L13 6" /><path d="M5 10H13V13H5Z" fill="#aaa" stroke="none" /></NavIcon>
            </NavButton>
            <NavButton $w={28} aria-label="Pan">
              <NavIcon><path d="M6.500 16.500Q3 13 1.500 9.500Q2.500 8 5.500 11L4.500 4.500Q5 3 6.500 4.500L7.500 8L8 2Q9 1 10 2V8L11.500 2.500Q13 2 13 3.500L12.500 9L15 5.500Q16.500 5 16.500 6.500L14 13L13 16.500Z" fill="#fff" /></NavIcon>
            </NavButton>
            <NavButton $w={24} aria-label="Zoom">
              <NavIcon><circle cx="6.500" cy="7.500" r="4.700" fill="#eef4f3" stroke="#666" /><path d="M10.500 11.500L14 15" stroke="#333" strokeWidth="3" /><path d="M13 4H17M15 2V6M13 8.500H17" /></NavIcon>
            </NavButton>
            <NavButton $w={42} aria-label="Fit">
              <NavIcon><rect x="1" y="1" width="16" height="16" stroke="#888" strokeDasharray="1.500 2.500" /><circle cx="8.500" cy="7.500" r="6" fill="#e3efec" stroke="#666" /><path d="M13 12.500L16 16" stroke="#333" strokeWidth="3" /></NavIcon>
              <Caret />
            </NavButton>
            <NavButton $w={40} aria-label="Display settings">
              <NavIcon><path d="M1 1.500H17V13H1Z" fill="#ddd" stroke="#666" /><path d="M3.500 4H14.500V11H3.500Z" fill="#9cbbe0" stroke="#3f5d86" /><path d="M6 13.500H12V16.500H6Z" fill="#bbb" stroke="#777" /></NavIcon>
              <Caret />
            </NavButton>
            <NavButton $w={28} aria-label="Grid and snaps">
              <NavIcon><path d="M1 1H17V17H1ZM4 1V17M7 1V17M10 1V17M13 1V17M1 4H17M1 7H17M1 10H17M1 13H17" stroke="#666" strokeWidth="1" /></NavIcon>
              <Caret />
            </NavButton>
            <NavButton $w={34} aria-label="Viewports">
              <NavIcon><path d="M1.500 2.500H8.300V8.500H1.500ZM9.700 2.500H16.500V8.500H9.700ZM1.500 9.800H8.300V15.800H1.500ZM9.700 9.800H16.500V15.800H9.700Z" fill="#a3bfe2" stroke="#3f5d86" /></NavIcon>
              <Caret />
            </NavButton>
          </NavBar>
        </BottomRow>
      </Viewport>

      <Timeline>
        <Playback>
          {playback.map(([name, d]) => (
            <PlayButton key={name} aria-label={name}>
              <svg width="17" height="17" viewBox="0 0 17 17"><path d={d} fill="#4a4a4a" stroke="#4a4a4a" strokeWidth="1.500" /></svg>
            </PlayButton>
          ))}
        </Playback>
        <Track>
          <TrackBar />
          <Features>
            {history.map((f, i) => (
              <Feature key={i} aria-label={f}>
                <svg width="18" height="18" viewBox="0 0 18 18" fill="none">{features[f]}</svg>
                <Tick />
              </Feature>
            ))}
          </Features>
          <Rail />
        </Track>
        <Marker>
          <svg width="14" height="35" viewBox="0 0 14 35"><path d="M1 0H13V4L8 11V35H6V11L1 4Z" fill="#616161" /></svg>
        </Marker>
        <Settings aria-label="Timeline settings">
          <svg width="18" height="18" viewBox="0 0 18 18" fill="none"><circle cx="9" cy="9" r="4.700" stroke="#949494" strokeWidth="3.400" /><circle cx="9" cy="9" r="7.200" stroke="#949494" strokeWidth="2.600" strokeDasharray="2.900 2.755" /></svg>
        </Settings>
      </Timeline>

      <Taskbar>
        <Start aria-label="Start">
          <svg width="18" height="18" viewBox="0 0 18 18" fill="#fff"><path d="M0 2.600L7.500 1.500V8.500H0ZM8.500 1.400L18 0V8.500H8.500ZM0 9.500H7.500V16.500L0 15.400ZM8.500 9.500H18V18L8.500 16.600Z" /></svg>
        </Start>
        <Search>
          <svg width="18" height="18" viewBox="0 0 18 18" fill="none" stroke="#222" strokeWidth="1.400"><circle cx="11" cy="6.500" r="5.700" /><path d="M7 10.500L.8 17" /></svg>
          <SearchInput type="text" aria-label="Type here to search" placeholder="Type here to search" />
        </Search>
        <Task $w={166} $active>
          <FusionLogo size={25} />
          Autodesk Fusion 36...
        </Task>
        <Task $w={159}>
          <svg width="25" height="25" viewBox="0 0 25 25"><rect width="25" height="25" rx="2" fill="#dbe7f1" /><rect x="4.500" y="5" width="16" height="12.500" fill="#bdd5ea" stroke="#8eaecb" /><path d="M8 19.500H16" stroke="#5f96c4" strokeWidth="2" /><circle cx="17.500" cy="16.500" r="3.700" fill="#ef5d5d" stroke="#fff" /></svg>
          Untitled - iSpring Fr...
        </Task>
        <Tray>
          <TrayButton $w={22} aria-label="Show hidden icons">
            <svg width="14" height="8" viewBox="0 0 14 8"><path d="M1 7L7 1L13 7" fill="none" stroke="#fff" strokeWidth="1.400" /></svg>
          </TrayButton>
          <TrayButton $w={28} aria-label="Network">
            <svg width="14" height="14" viewBox="0 0 14 14" fill="none" stroke="#ccc" strokeWidth="1.200"><path d="M1 13Q1 1 13 1M4 13Q4 4 13 4M7 13Q7 7 13 7M10 13Q10 10 13 10" /><circle cx="12" cy="12.500" r="1.300" fill="#fff" stroke="none" /></svg>
          </TrayButton>
          <TrayButton $w={22} aria-label="Battery">
            <svg width="17" height="12" viewBox="0 0 17 12"><path d="M3.500 2.500H15V10.500H3.500Z" fill="#fff" stroke="#fff" /><path d="M15.500 5H17V8H15.500ZM0 .5H5V4L3.500 5.500V8H2V5.500L0 4Z" fill="#fff" /><path d="M1.500 2H3.500V3.500H1.500Z" fill="#1c1c1c" /></svg>
          </TrayButton>
          <TrayButton $w={26} aria-label="Volume">
            <svg width="18" height="14" viewBox="0 0 18 14" fill="none" stroke="#eee" strokeWidth="1.100"><path d="M1 4.500H3.500L7 1.500V12.500L3.500 9.500H1Z" /><path d="M9 5Q10.500 7 9 9" /><path d="M11.500 3Q14 7 11.500 11M14 1Q18 7 14 13" stroke="#888" /></svg>
          </TrayButton>
          <TrayButton $w={38}>ENG</TrayButton>
          <Clock>00:21<br />31-03-2020</Clock>
          <TrayButton $w={42} aria-label="Notifications">
            <svg width="18" height="17" viewBox="0 0 18 17"><path d="M1 1H17V13.500H11.500L9 16L6.500 13.500H1Z" fill="none" stroke="#fff" strokeWidth="1.200" /></svg>
          </TrayButton>
          <ShowDesktop aria-label="Show desktop" />
        </Tray>
      </Taskbar>
    </Window>
  );
}
